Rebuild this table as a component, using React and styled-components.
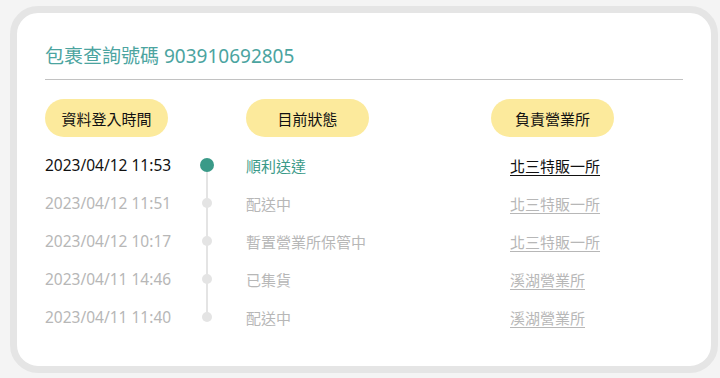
import styled, { createGlobalStyle } from 'styled-components';

const records = [
  { time: '2023/04/12 11:53', status: '順利送達', office: '北三特販一所' },
  { time: '2023/04/12 11:51', status: '配送中', office: '北三特販一所' },
  { time: '2023/04/12 10:17', status: '暫置營業所保管中', office: '北三特販一所' },
  { time: '2023/04/11 14:46', status: '已集貨', office: '溪湖營業所' },
  { time: '2023/04/11 11:40', status: '配送中', office: '溪湖營業所' },
];

function App() {
  return (
    <>
      <GlobalStyle />
      <Page>
        <Card>
          <Title>包裹查詢號碼 903910692805</Title>
          <HeaderRow>
            <Pill>資料登入時間</Pill>
            <span />
            <Pill>目前狀態</Pill>
            <Pill>負責營業所</Pill>
          </HeaderRow>
          <ul>
            {records.map((r, i) => (
              <Row key={i}>
                <Time $current={i === 0}>{r.time}</Time>
                <DotCell $last={i === records.length - 1}>
                  <Dot $current={i === 0} />
                </DotCell>
                <Status $current={i === 0}>{r.status}</Status>
                <Office href="#" $current={i === 0}>
                  {r.office}
                </Office>
              </Row>
            ))}
          </ul>
        </Card>
      </Page>
    </>
  );
}

const GlobalStyle = createGlobalStyle`
  html, body {
    margin: 0;
    padding: 0;
    background: #f4f4f4;
    font-family: "Noto Sans", "Noto Sans CJK TC", sans-serif;
  }

  ul {
    list-style: none;
    padding: 0;
    margin: 0;
  }
`;

const Page = styled.div`
  padding: 6px 2px 5px 10px;
`;

const Card = styled.div`
  box-sizing: border-box;
  width: 708px;
  height: 367px;
  border: 7.5px solid #e5e5e5;
  border-radius: 28px;
  background: #fff;
  padding: 30px 28px 0;
`;

const Title = styled.h1`
  margin: 0;
  font-size: 19px;
  font-weight: 400;
  line-height: 26px;
  color: #4ba4a0;
  padding-bottom: 10px;
  border-bottom: 1px solid #c2c2c2;
`;

const grid = `
  display: grid;
  grid-template-columns: 150px 24px 272px auto;
  column-gap: 0;
`;

const HeaderRow = styled.div`
  ${grid}
  margin-top: 19px;
  margin-bottom: 9px;

  & > :nth-child(3) {
    margin-left: 27px;
  }
`;

const Pill = styled.div`
  width: 123px;
  height: 38px;
  border-radius: 19px;
  background: #fcea9c;
  color: #111;
  font-size: 15px;
  display: flex;
  align-items: center;
  justify-content: center;
`;

const Row = styled.li`
  ${grid}
  height: 38px;
  align-items: center;
  font-size: 15px;
`;

const Time = styled.span`
  font-size: 15.5px;
  white-space: nowrap;
  color: ${(p) => (p.$current ? '#111' : '#b7b7b7')};
`;

const DotCell = styled.span`
  position: relative;
  height: 100%;
  display: flex;
  align-items: center;
  justify-content: center;

  &::after {
    content: '';
    display: ${(p) => (p.$last ? 'none' : 'block')};
    position: absolute;
    left: 11px;
    top: 19px;
    width: 2px;
    height: 38px;
    background: #e4e4e4;
  }
`;

const Dot = styled.span`
  position: relative;
  z-index: 1;
  width: ${(p) => (p.$current ? '14px' : '10px')};
  height: ${(p) => (p.$current ? '14px' : '10px')};
  border-radius: 50%;
  background: ${(p) => (p.$current ? '#3a9a88' : '#e4e4e4')};
`;

const Status = styled.span`
  margin-left: 27px;
  color: ${(p) => (p.$current ? '#3a9a88' : '#b7b7b7')};
`;

const Office = styled.a`
  justify-self: start;
  margin-left: 19px;
  color: ${(p) => (p.$current ? '#111' : '#b7b7b7')};
  text-decoration: underline;
  text-underline-offset: 3px;
`;

export default App;
